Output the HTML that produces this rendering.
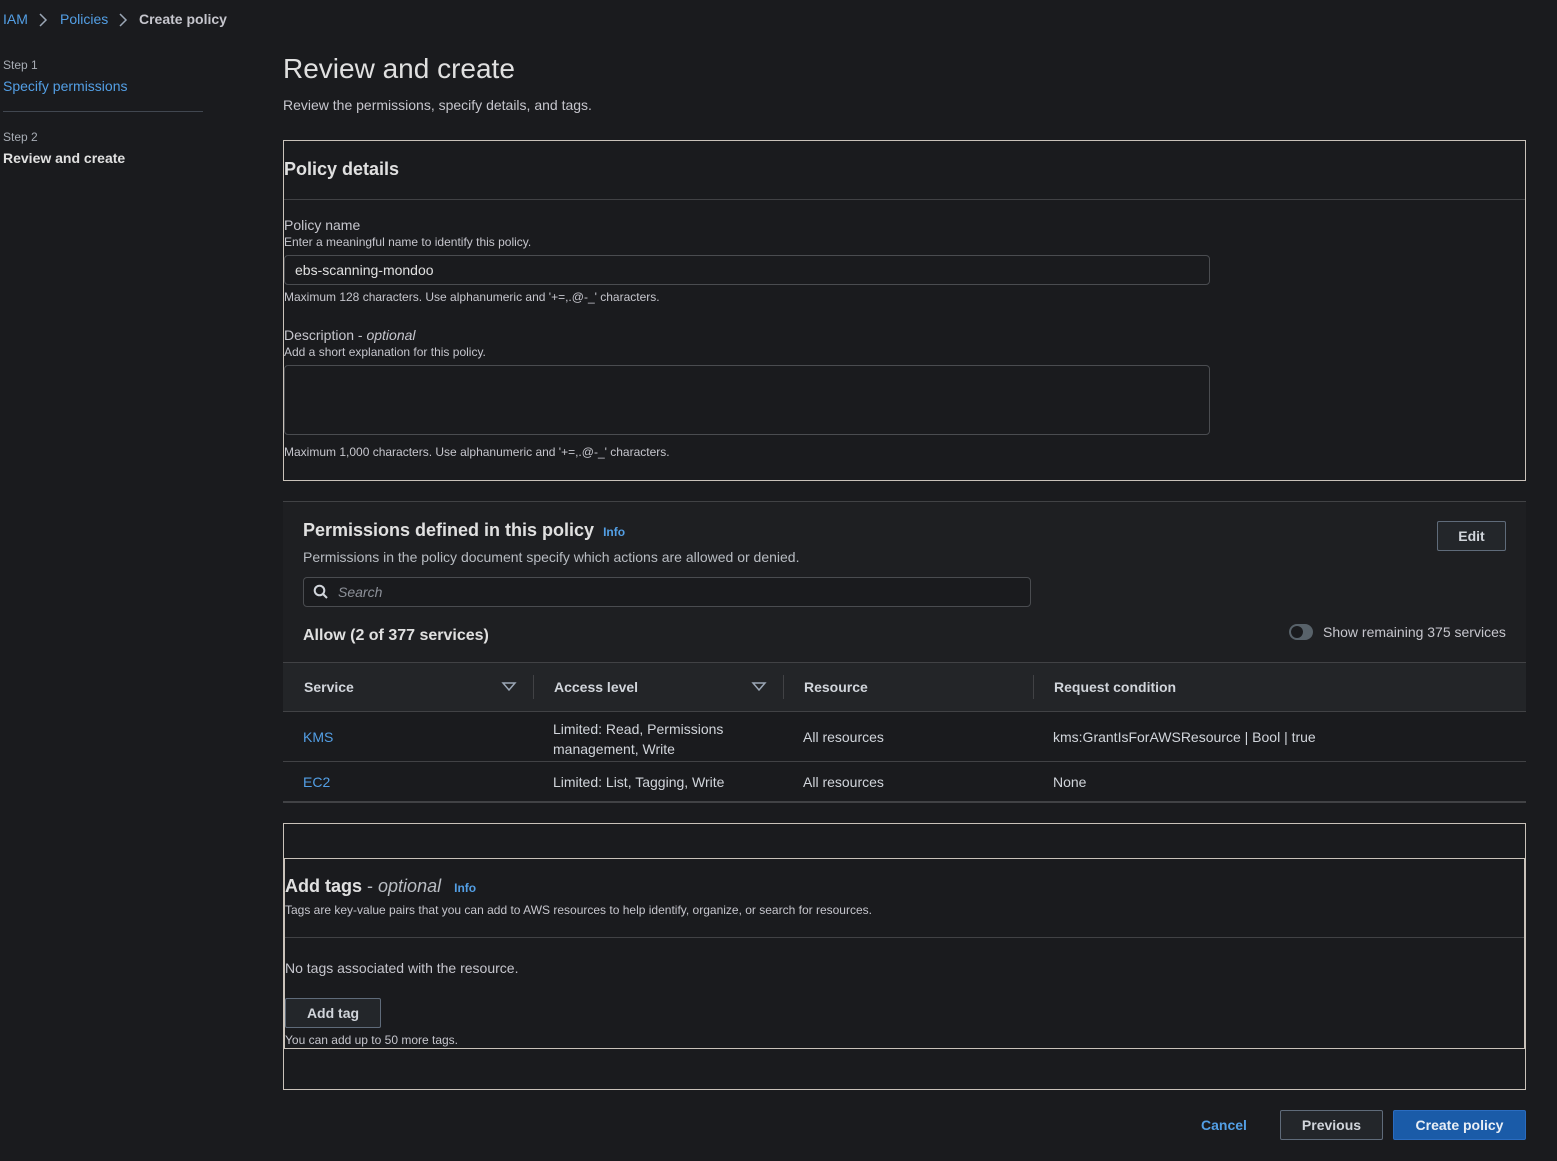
<!DOCTYPE html>
<html><head><meta charset="utf-8"><style>
*{box-sizing:border-box;margin:0;padding:0}
body{width:1557px;height:1161px;background:#1a1b1e;font-family:"Liberation Sans",sans-serif;color:#d1d5db;position:relative;overflow:hidden}
.a{position:absolute;white-space:nowrap}
.blue{color:#539fe5}
.lb{border:1px solid #c9c2ba}
.sm{font-size:12px;color:#c6c6cd}
.btn{position:absolute;border:1px solid #5f6b7a;border-radius:2px;background:#23262a;color:#d1d5db;font-weight:bold;font-size:14px;text-align:center}
</style></head><body>
<div class="a" style="left:3px;top:11px;font-size:14px"><span class="blue">IAM</span></div>
<svg class="a" style="left:37px;top:12px" width="12" height="16"><path d="M3 2l6 6-6 6" stroke="#9ba7b6" stroke-width="1.5" fill="none"/></svg>
<div class="a blue" style="left:60px;top:11px;font-size:14px">Policies</div>
<svg class="a" style="left:117px;top:12px" width="12" height="16"><path d="M3 2l6 6-6 6" stroke="#9ba7b6" stroke-width="1.5" fill="none"/></svg>
<div class="a" style="left:139px;top:11px;font-size:14px;font-weight:bold;color:#c6c6cd">Create policy</div>

<div class="a" style="left:3px;top:58px;font-size:12px;color:#a8adb5">Step 1</div>
<div class="a blue" style="left:3px;top:78px;font-size:14px">Specify permissions</div>
<div class="a" style="left:3px;top:111px;width:200px;height:1px;background:#414750"></div>
<div class="a" style="left:3px;top:130px;font-size:12px;color:#a8adb5">Step 2</div>
<div class="a" style="left:3px;top:150px;font-size:14px;font-weight:bold;color:#e0e0e0">Review and create</div>

<div class="a" style="left:283px;top:53px;font-size:28px;color:#e0e0e0">Review and create</div>
<div class="a" style="left:283px;top:97px;font-size:14px;color:#c6c6cd">Review the permissions, specify details, and tags.</div>

<div class="a lb" style="left:283px;top:140px;width:1243px;height:341px"></div>
<div class="a" style="left:284px;top:199px;width:1241px;height:1px;background:#414245"></div>
<div class="a" style="left:284px;top:159px;font-size:18px;font-weight:bold;color:#e0e0e0">Policy details</div>
<div class="a" style="left:284px;top:217px;font-size:14px;color:#c6c6cd">Policy name</div>
<div class="a sm" style="left:284px;top:235px">Enter a meaningful name to identify this policy.</div>
<div class="a" style="left:284px;top:255px;width:926px;height:30px;border:1px solid #4a4c50;border-radius:4px;padding:6px 10px;font-size:14px;color:#e0e0e0">ebs-scanning-mondoo</div>
<div class="a sm" style="left:284px;top:290px">Maximum 128 characters. Use alphanumeric and '+=,.@-_' characters.</div>
<div class="a" style="left:284px;top:327px;font-size:14px;color:#c6c6cd">Description - <i>optional</i></div>
<div class="a sm" style="left:284px;top:345px">Add a short explanation for this policy.</div>
<div class="a" style="left:284px;top:365px;width:926px;height:70px;border:1px solid #4a4c50;border-radius:4px"></div>
<div class="a sm" style="left:284px;top:445px">Maximum 1,000 characters. Use alphanumeric and '+=,.@-_' characters.</div>

<div class="a" style="left:283px;top:501px;width:1243px;height:1px;background:#414245"></div>
<div class="a" style="left:283px;top:502px;width:1243px;height:160px;background:#1e1f22"></div>
<div class="a" style="left:303px;top:520px;font-size:18px;font-weight:bold;color:#e0e0e0">Permissions defined in this policy <span class="blue" style="font-size:12px;margin-left:4px">Info</span></div>
<div class="a" style="left:303px;top:549px;font-size:14px;color:#b8bcc2">Permissions in the policy document specify which actions are allowed or denied.</div>
<div class="btn" style="left:1437px;top:521px;width:69px;height:30px;line-height:28px">Edit</div>
<div class="a" style="left:303px;top:577px;width:728px;height:30px;border:1px solid #4a4c50;border-radius:4px;background:#1a1b1e"></div>
<svg class="a" style="left:313px;top:584px" width="16" height="16"><circle cx="6.5" cy="6.5" r="4.8" stroke="#d1d5db" stroke-width="2" fill="none"/><path d="M10 10l4 4" stroke="#d1d5db" stroke-width="2"/></svg>
<div class="a" style="left:338px;top:584px;font-size:14px;font-style:italic;color:#8d9199">Search</div>
<div class="a" style="left:303px;top:627px;font-size:16px;font-weight:bold;color:#e0e0e0">Allow (2 of 377 services)</div>
<div class="a" style="left:1289px;top:624px;width:24px;height:16px;border-radius:8px;background:#58626a"></div>
<div class="a" style="left:1291px;top:626px;width:12px;height:12px;border-radius:6px;background:#1a1b1e"></div>
<div class="a" style="left:1323px;top:624px;font-size:14px;color:#c6c6cd">Show remaining 375 services</div>

<div class="a" style="left:283px;top:662px;width:1243px;height:1px;background:#414245"></div>
<div class="a" style="left:283px;top:663px;width:1243px;height:48px;background:#232528"></div>
<div class="a" style="left:283px;top:711px;width:1243px;height:1px;background:#414245"></div>
<div class="a" style="left:304px;top:679px;font-size:14px;font-weight:bold;color:#d1d5db">Service</div>
<svg class="a" style="left:501px;top:682px" width="16" height="10"><path d="M2 1h12L8 8z" stroke="#9ba7b6" stroke-width="1.5" fill="none"/></svg>
<div class="a" style="left:533px;top:675px;width:1px;height:24px;background:#414245"></div>
<div class="a" style="left:554px;top:679px;font-size:14px;font-weight:bold;color:#d1d5db">Access level</div>
<svg class="a" style="left:751px;top:682px" width="16" height="10"><path d="M2 1h12L8 8z" stroke="#9ba7b6" stroke-width="1.5" fill="none"/></svg>
<div class="a" style="left:783px;top:675px;width:1px;height:24px;background:#414245"></div>
<div class="a" style="left:804px;top:679px;font-size:14px;font-weight:bold;color:#d1d5db">Resource</div>
<div class="a" style="left:1033px;top:675px;width:1px;height:24px;background:#414245"></div>
<div class="a" style="left:1054px;top:679px;font-size:14px;font-weight:bold;color:#d1d5db">Request condition</div>

<div class="a blue" style="left:303px;top:729px;font-size:14px">KMS</div>
<div class="a" style="left:553px;top:719px;font-size:14px;line-height:20px;color:#d1d5db;white-space:normal;width:200px">Limited: Read, Permissions management, Write</div>
<div class="a" style="left:803px;top:729px;font-size:14px">All resources</div>
<div class="a" style="left:1053px;top:729px;font-size:14px">kms:GrantIsForAWSResource | Bool | true</div>
<div class="a" style="left:283px;top:761px;width:1243px;height:1px;background:#414245"></div>
<div class="a blue" style="left:303px;top:774px;font-size:14px">EC2</div>
<div class="a" style="left:553px;top:774px;font-size:14px">Limited: List, Tagging, Write</div>
<div class="a" style="left:803px;top:774px;font-size:14px">All resources</div>
<div class="a" style="left:1053px;top:774px;font-size:14px">None</div>
<div class="a" style="left:283px;top:801px;width:1243px;height:2px;background:#414245"></div>

<div class="a lb" style="left:283px;top:823px;width:1243px;height:267px"></div>
<div class="a lb" style="left:284px;top:858px;width:1241px;height:191px"></div>
<div class="a" style="left:285px;top:937px;width:1239px;height:1px;background:#414245"></div>
<div class="a" style="left:285px;top:876px;font-size:18px;color:#e0e0e0"><b>Add tags</b> <span style="color:#b8bcc2">- <i>optional</i></span> <span class="blue" style="font-size:12px;font-weight:bold;margin-left:8px">Info</span></div>
<div class="a sm" style="left:285px;top:903px">Tags are key-value pairs that you can add to AWS resources to help identify, organize, or search for resources.</div>
<div class="a" style="left:285px;top:960px;font-size:14px;color:#c6c6cd">No tags associated with the resource.</div>
<div class="btn" style="left:285px;top:998px;width:96px;height:30px;line-height:28px">Add tag</div>
<div class="a sm" style="left:285px;top:1033px">You can add up to 50 more tags.</div>

<div class="a blue" style="left:1201px;top:1117px;font-size:14px;font-weight:bold">Cancel</div>
<div class="btn" style="left:1280px;top:1110px;width:103px;height:30px;line-height:28px">Previous</div>
<div class="btn" style="left:1393px;top:1110px;width:133px;height:30px;line-height:28px;background:#1a5ba8;border-color:#2a6cc0;color:#e8eef5">Create policy</div>
</body></html>
